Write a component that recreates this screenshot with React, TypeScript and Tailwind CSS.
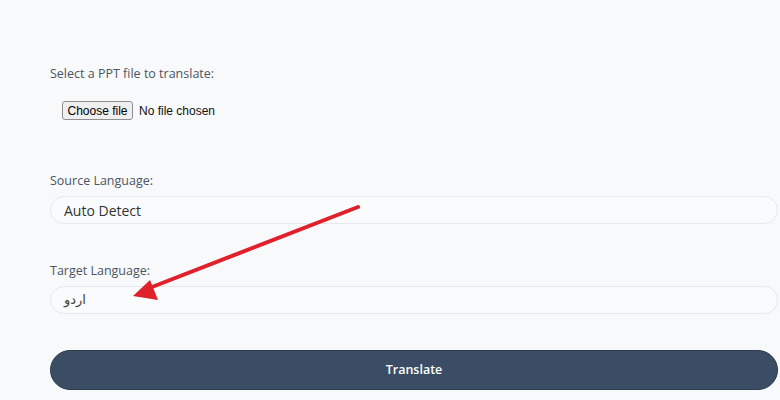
import React from "react";

const labelCls = "block text-[12.5px] text-[#4b5563] leading-[18px]";

export default function App() {
  return (
    <div
      className="relative w-[780px] h-[400px] bg-[#f8f9fb] overflow-hidden"
      style={{ fontFamily: '"Open Sans", "Noto Sans", sans-serif' }}
    >
      <form className="flex flex-col pl-[50px] pr-[2px] pt-[65px]">
        {/* file picker */}
        <label className={labelCls}>Select a PPT file to translate:</label>
        <label className="mt-[18px] ml-[12px] flex items-center h-[19px] gap-[6px] font-['Liberation_Sans',Arial,sans-serif] text-[12px] cursor-pointer">
          <span className="h-[19px] w-[71px] flex items-center justify-center border border-[#8f8f8f] rounded-[3px] bg-[#efefef] text-black">
            Choose file
          </span>
          <span className="text-[#111]">No file chosen</span>
          <input type="file" accept=".ppt,.pptx" className="hidden" />
        </label>

        {/* source language */}
        <label className={`${labelCls} mt-[52px]`}>Source Language:</label>
        <div className="mt-[6px] h-[28px] rounded-full border border-[#e6e8eb] bg-[#fafbfc] flex items-center pl-[13px] text-[14px] text-[#333]">
          Auto Detect
        </div>

        {/* target language */}
        <label className={`${labelCls} mt-[38px]`}>Target Language:</label>
        <div className="mt-[6px] h-[28px] rounded-full border border-[#e6e8eb] bg-[#fafbfc] flex items-center pl-[13px] text-[13px] text-[#444] font-['Noto_Sans','DejaVu_Sans',sans-serif]">
          اردو
        </div>

        <button
          type="button"
          className="mt-[36px] h-[40px] rounded-full bg-[#3a4d64] border border-[#2c3b4d] text-white text-[12.5px] font-semibold"
        >
          Translate
        </button>
      </form>

      {/* red annotation arrow */}
      <svg
        className="absolute left-0 top-0 pointer-events-none"
        width="780"
        height="400"
      >
        <line x1="358" y1="207" x2="152" y2="287" stroke="#e0212b" strokeWidth="4" strokeLinecap="round" />
        <polygon points="133,296 150,280 158,300" fill="#e0212b" />
      </svg>
    </div>
  );
}
